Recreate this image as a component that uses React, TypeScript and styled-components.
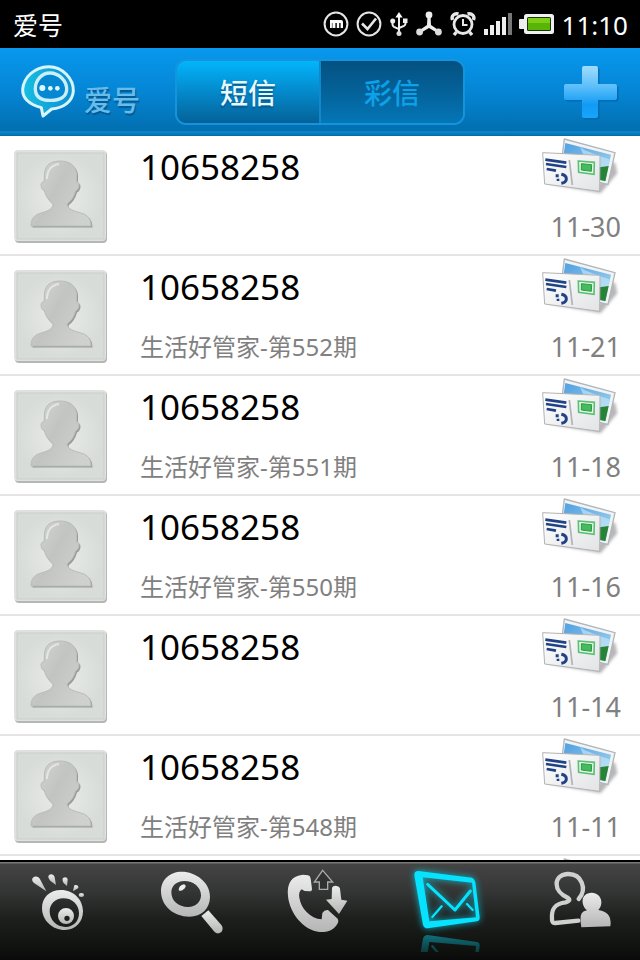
import React, { useState } from 'react';
import styled, { createGlobalStyle, css } from 'styled-components';

const GlobalStyle = createGlobalStyle`
  *, *::before, *::after { box-sizing: border-box; }
  body { margin: 0; background: #fff; font-family: "Noto Sans", "Noto Sans CJK SC", sans-serif; }
  button { font: inherit; color: inherit; border: 0; padding: 0; background: none; cursor: pointer; }
  svg { display: block; flex: none; }
`;

const Screen = styled.div`
  display: flex;
  flex-direction: column;
  height: 100vh;
  overflow: hidden;
`;

const StatusBar = styled.header`
  display: flex;
  align-items: center;
  justify-content: space-between;
  height: 48px;
  flex: none;
  padding: 0 12px 0 13px;
  background: #000;
  color: #fff;
`;

const AppName = styled.span`
  padding-top: 2px;
  font-size: 25px;
  line-height: 36px;
`;

const StatusIcons = styled.div`
  display: flex;
  align-items: center;
  gap: 7px;
`;

const Clock = styled.time`
  padding-top: 2px;
  font-size: 26px;
  line-height: 36px;
`;

const TopBar = styled.div`
  display: grid;
  grid-template-columns: 1fr 290px 1fr;
  align-items: center;
  height: 88px;
  flex: none;
  padding: 0 20px;
  background: linear-gradient(#0898ee, #0585d4 50%, #026fb0 94%, #0a86cb 95%, #0778b8 98%, #0368a4);
`;

const Brand = styled.div`
  display: flex;
  align-items: center;
`;

const BrandName = styled.span`
  padding-top: 16px;
  margin-left: 6px;
  font-size: 28px;
  line-height: 36px;
  font-weight: 500;
  color: #66bdec;
  text-shadow: 1px 2px 1px #045a92;
`;

const Segments = styled.div`
  display: flex;
  height: 66px;
  border: 2px solid #1594dc;
  border-radius: 11px;
  overflow: hidden;
`;

const Segment = styled.button<{ $active: boolean }>`
  flex: 1;
  padding-top: 2px;
  font-size: 28px;
  line-height: 36px;
  font-weight: 500;
  ${({ $active }) =>
    $active
      ? css`
          color: #e8f8ff;
          background: linear-gradient(#02b5fc, #0489cb 50%, #046298);
          text-shadow: 0 2px 2px #04568a;
        `
      : css`
          color: #0da1ea;
          background: linear-gradient(#045181, #046299 50%, #0476b7);
          border-left: 2px solid #1188cb;
        `}
`;

const AddButton = styled.button`
  justify-self: end;
`;

const MessageList = styled.ul`
  flex: 1;
  min-height: 0;
  overflow: hidden;
  margin: 0;
  padding: 0;
  list-style: none;
`;

const MessageItem = styled.li`
  border-bottom: 2px solid #e4e4e4;
`;

const MessageButton = styled.button`
  display: flex;
  align-items: flex-start;
  width: 100%;
  min-height: 118px;
  text-align: left;
`;

const AvatarBox = styled.span`
  padding: 14px 32px 8px 14px;
`;

const MessageText = styled.span`
  display: flex;
  flex: 1;
  flex-direction: column;
  gap: 22px;
  padding-top: 9px;
  min-width: 0;
`;

const Sender = styled.span`
  font-size: 35px;
  line-height: 44px;
  color: #000;
`;

const Snippet = styled.span`
  font-size: 24px;
  line-height: 32px;
  color: #808080;
`;

const MessageMeta = styled.span`
  display: flex;
  flex-direction: column;
  align-items: flex-end;
  gap: 13px;
  padding-right: 19px;
`;

const MessageDate = styled.span`
  font-size: 27px;
  line-height: 36px;
  color: #808080;
`;

const TabBar = styled.nav`
  display: flex;
  height: 100px;
  flex: none;
  border-top: 2px solid #000;
  background: linear-gradient(#777 0, #777 1px, #434443 2px, #343635 30%, #1d1f1d 58%, #0f110e 90%, #0a0a0a);
`;

const Tab = styled.button`
  display: flex;
  flex: 1;
  justify-content: center;
`;

const BadgeIcon = () => (
  <svg width="26" height="26" viewBox="0 0 26 26" fill="none">
    <circle cx="13" cy="13" r="11.4" stroke="#e6e6e6" strokeWidth="2" />
    <path d="M7 9H18Q20 9 20 11V17H17.600V12H16.200V17H13.800V12H12.400V17H7Z" fill="#fff" />
    <path d="M9.300 12V17" stroke="#555" strokeWidth="0.800" />
  </svg>
);

const CheckIcon = () => (
  <svg width="26" height="26" viewBox="0 0 26 26" fill="none" stroke="#e6e6e6">
    <circle cx="13" cy="13" r="11.4" strokeWidth="2" />
    <path d="M6 12.500L11.500 18L20 7.500" strokeWidth="2.600" />
  </svg>
);

const UsbIcon = () => (
  <svg width="20" height="26" viewBox="0 0 20 26" fill="none" stroke="#eee" strokeWidth="2">
    <path d="M10 4V22M3.500 11V13.500Q3.500 15 5 15.800L10 18.200M16.500 11V12.500Q16.500 14 15 14.800L10 17" />
    <path d="M10 1L13.600 6.500H6.400Z" fill="#fff" stroke="none" />
    <circle cx="10" cy="22.500" r="2.500" fill="#ddd" stroke="none" />
    <circle cx="3.700" cy="10" r="2.500" fill="#eee" stroke="none" />
    <path d="M14 7.500H18.500V12H14Z" fill="#eee" stroke="none" />
  </svg>
);

const NetworkIcon = () => (
  <svg width="26" height="26" viewBox="0 0 26 26" fill="#eee">
    <path d="M11.500 5H14.500L15 14L23 19.500L21.500 22L13 17L4.500 22L3 19.500L11 14Z" />
    <circle cx="13" cy="4" r="3.400" />
    <circle cx="3.600" cy="21" r="3.400" fill="#ddd" />
    <circle cx="22.400" cy="21" r="3.400" fill="#ddd" />
  </svg>
);

const AlarmIcon = () => (
  <svg width="28" height="26" viewBox="0 0 28 26" fill="none" stroke="#e8e8e8">
    <circle cx="14" cy="13.500" r="9" strokeWidth="2.800" />
    <path d="M14 8V14H18.500" strokeWidth="2" />
    <path d="M3.500 9C2 5 5 2 9.500 3M24.500 9C26 5 23 2 18.500 3" strokeWidth="3.400" />
    <path d="M7.500 21L5 24M20.500 21L23 24" strokeWidth="3.400" />
  </svg>
);

const SignalIcon = () => (
  <svg width="28" height="26" viewBox="0 0 28 26" fill="#eee">
    <path d="M0 18H4V24H0Z" />
    <path d="M6 14H10V24H6Z" />
    <path d="M12 10H16V24H12Z" />
    <path d="M18 6H22V24H18Z" />
    <path d="M24 2H28V24H24Z" fill="#777" />
  </svg>
);

const BatteryIcon = () => (
  <svg width="36" height="26" viewBox="0 0 36 26">
    <rect x="0" y="8" width="6" height="10" rx="1" fill="#eee" />
    <rect x="5" y="3" width="30" height="20" rx="2.500" fill="#f0f0f4" />
    <rect x="8" y="6" width="24" height="14" rx="1.500" fill="#173900" />
    <rect x="9" y="7" width="22" height="6" fill="#7ecd16" />
    <rect x="9" y="12" width="22" height="7" fill="#58b507" />
  </svg>
);

const BrandLogo = () => (
  <svg width="58" height="58" viewBox="60 190 174 174">
    <defs>
      <linearGradient id="brandFill" x1="0" y1="0" x2="1" y2="0">
        <stop offset="0" stopColor="#17bfe0" />
        <stop offset="1" stopColor="#0d8fd2" />
      </linearGradient>
    </defs>
    <path
      d="M145 201C188 200 221 238 220 274C218 306 190 325 155 328L129 349L124 324C88 314 67 297 68 269C71 232 104 202 145 201Z"
      fill="url(#brandFill)"
      stroke="#d9f4fd"
      strokeWidth="9"
      strokeLinejoin="round"
    />
    <path
      d="M150 220C177 220 200 244 200 269C200 292 179 302 151 302C122 302 106 291 106 267C106 243 124 220 150 220Z"
      fill="#0687d2"
      stroke="#c9effc"
      strokeWidth="10"
    />
    <g fill="#dff6ff">
      <circle cx="127" cy="265" r="9" />
      <circle cx="151" cy="266" r="7" />
      <circle cx="172" cy="266" r="7" />
    </g>
  </svg>
);

const PlusIcon = () => (
  <svg width="62" height="62" viewBox="0 0 62 62">
    <defs>
      <linearGradient id="plusFill" x1="0" y1="0" x2="0" y2="1">
        <stop offset="0" stopColor="#a2dcff" />
        <stop offset="0.4" stopColor="#5bbefa" />
        <stop offset="0.75" stopColor="#109bf5" />
        <stop offset="1" stopColor="#18a5fb" />
      </linearGradient>
    </defs>
    <path transform="translate(1.500 1.500)" fill="#035f9c" opacity=".6" d="M26 5H38Q40 5 40 7V23H57Q59 23 59 25V37Q59 39 57 39H40V55Q40 57 38 57H26Q24 57 24 55V39H8Q6 39 6 37V25Q6 23 8 23H24V7Q24 5 26 5Z" />
    <path fill="url(#plusFill)" d="M26 5H38Q40 5 40 7V23H57Q59 23 59 25V37Q59 39 57 39H40V55Q40 57 38 57H26Q24 57 24 55V39H8Q6 39 6 37V25Q6 23 8 23H24V7Q24 5 26 5Z" />
  </svg>
);

const BUST =
  'M46 11C37 11 31 15 30.500 24L30 32C26 31 26 39 30.500 41C32 47 35 51 39 54C39 59 34 61 27 63C20 65 17 69 17 76H77C77 69 74 65 67 63C60 61 53 59 53 54C57 51 60 47 61.500 41C66 39 66 31 62.500 32V24C62 15 55 11 46 11Z';

const Avatar = () => (
  <svg width="94" height="94" viewBox="0 0 94 94">
    <defs>
      <radialGradient id="avatarBack">
        <stop offset="0" stopColor="#e9ece9" />
        <stop offset="1" stopColor="#d8dcd8" />
      </radialGradient>
      <linearGradient id="bustFill" x1="0" y1="0" x2="1" y2="0.6">
        <stop offset="0" stopColor="#d6d8d6" />
        <stop offset="0.5" stopColor="#c2c4c2" />
        <stop offset="1" stopColor="#cfd1cf" />
      </linearGradient>
    </defs>
    <rect x="1" y="1" width="92" height="92" rx="4" fill="#b4b8b4" />
    <rect x="0" y="0" width="92" height="91" rx="4" fill="#dfe1df" />
    <rect x="3" y="3" width="87" height="86" fill="url(#avatarBack)" stroke="#c9cec9" />
    <path transform="translate(1.500 1.500)" d={BUST} fill="#999d99" />
    <path d={BUST} fill="url(#bustFill)" stroke="#b9bcb9" />
    <path d="M33 29C33 20 38 15 45 14" fill="none" stroke="#e4e6e4" strokeWidth="2" />
  </svg>
);

const PostcardIcon = () => (
  <svg width="84" height="60" viewBox="51 18 252 180">
    <defs>
      <linearGradient id="skyFill" x1="0" y1="0" x2="1" y2="1">
        <stop offset="0" stopColor="#4f9fe0" />
        <stop offset="1" stopColor="#a5d7f3" />
      </linearGradient>
      <linearGradient id="cardFill" x1="0" y1="0" x2="1" y2="1">
        <stop offset="0" stopColor="#fff" />
        <stop offset="1" stopColor="#e2e3e5" />
      </linearGradient>
      <filter id="cardShadow" x="-20%" y="-20%" width="140%" height="140%">
        <feGaussianBlur stdDeviation="5" />
      </filter>
    </defs>
    <path d="M76 160L242 190L292 130L286 100L262 92L240 160Z" fill="#888" opacity=".6" filter="url(#cardShadow)" />
    <path d="M133 27L285 68L264 163L120 130Z" fill="#f2f3f4" stroke="#b0b6bb" strokeWidth="4" />
    <path d="M136 39L273 74L256 154L124 120Z" fill="url(#skyFill)" />
    <path d="M180 51C200 66 230 74 269 88L262 124L205 108Z" fill="#cbe9f7" opacity=".6" />
    <path d="M266 108L256 154L225 146L238 112Z" fill="#278437" />
    <path d="M68 68L240 76L239 184L74 162Z" fill="url(#cardFill)" stroke="#b3b3b5" strokeWidth="3" />
    <path d="M148 90L157 165" stroke="#b0b2b5" strokeWidth="5" />
    <g stroke="#1f4186" strokeWidth="8" fill="none">
      <path d="M76 89L139 98M78 102L139 111M80 117L108 122" />
      <path d="M124 133C145 137 143 157 124 160" strokeWidth="9" />
    </g>
    <path d="M107 133H116V142H107ZM110 146H118V153H110Z" fill="#1f4186" />
    <path d="M175 93L223 97L222 133L176 127Z" fill="#edf8ee" stroke="#5cc176" strokeWidth="5" />
    <path d="M184 101L215 104L214 124L184 120Z" fill="#47ba60" stroke="#289a43" strokeWidth="3" />
  </svg>
);

const TabGradient = ({ id }: { id: string }) => (
  <defs>
    <linearGradient id={id} x1="0" y1="0" x2="0" y2="1">
      <stop offset="0" stopColor="#ececec" />
      <stop offset="1" stopColor="#b5b5b5" />
    </linearGradient>
  </defs>
);

const EyeIcon = () => (
  <svg width="96" height="96" viewBox="48 36 288 288">
    <TabGradient id="eyeFill" />
    <g fill="url(#eyeFill)">
      <path
        fillRule="evenodd"
        d="M183 120C222 120 249 150 249 184C249 216 227 240 195 240C157 240 126 211 126 174C126 143 149 120 183 120ZM190 145C166 145 149 162 149 184C149 210 169 231 197 231C221 231 237 213 237 190C237 164 217 145 190 145Z"
      />
      <path fillRule="evenodd" d="M198 174A24 24 0 1 0 198 222A24 24 0 1 0 198 174ZM201 197A8 8 0 1 1 201 213A8 8 0 1 1 201 197Z" />
      <path d="M98 84C105 77 116 79 121 89L139 124L102 99C96 94 95 88 98 84Z" />
      <path d="M147 75C154 70 162 74 164 82L168 105L151 92C145 86 143 79 147 75Z" />
      <path d="M189 84C195 80 202 82 203 89L201 108L191 99C188 94 186 88 189 84Z" />
      <path d="M223 106C230 103 236 107 235 114L219 124Z" />
      <ellipse cx="244" cy="135" rx="8" ry="6" />
    </g>
  </svg>
);

const SearchIcon = () => (
  <svg width="96" height="96" viewBox="432 36 288 288">
    <TabGradient id="lensFill" />
    <path d="M604 198L625 181L664 225C670 233 668 242 663 247C656 252 648 251 642 244Z" fill="url(#lensFill)" />
    <path
      fillRule="evenodd"
      fill="url(#lensFill)"
      d="M545 65C588 65 630 97 630 140C630 175 605 200 568 200C522 200 483 169 483 123C483 89 509 65 545 65ZM553 93C529 93 514 108 514 127C514 153 535 171 564 171C588 171 603 155 603 136C603 111 580 93 553 93Z"
    />
    <path d="M536 121Q536 106 552 103Q561 106 554 115Q544 126 536 121Z" fill="#eee" />
  </svg>
);

const CallIcon = () => (
  <svg width="96" height="96" viewBox="96 36 288 288">
    <TabGradient id="callFill" />
    <path
      fill="url(#callFill)"
      d="M189 74L204 76Q211 77 212 86L216 116Q216 124 209 124L194 123Q187 120 185 118Q175 125 178 143C183 176 211 205 245 208L247 189Q253 179 264 180L293 206Q298 214 290 225C279 242 260 247 239 246C191 242 149 190 144 139C140 99 155 77 189 74Z"
    />
    <path d="M248 61L278 96H263V118H238V96H223Z" fill="#303231" stroke="#ababab" strokeWidth="4" />
    <path d="M276 113Q278 107 287 107Q299 109 300 116L304 149L322 152L297 192L258 149L275 147Z" fill="url(#callFill)" />
  </svg>
);

const Envelope = () => (
  <g fill="none" stroke="#07e2ff" strokeLinejoin="round" strokeLinecap="round">
    <path
      fillRule="evenodd"
      fill="#07e2ff"
      stroke="none"
      d="M55 63L216 83Q224 86 226 97L239 202Q240 212 231 214L83 235Q72 235 69 224L43 76Q42 63 55 63ZM68 82L88 214L228 202L216 98Z"
    />
    <path d="M83 103L165 180L211 123" strokeWidth="9" />
    <path d="M125 169L97 201M201 162L218 180" strokeWidth="7" />
  </g>
);

const MailIcon = () => (
  <svg width="96" height="96" viewBox="0 36 288 288">
    <defs>
      <filter id="mailGlow" x="-30%" y="-30%" width="160%" height="160%">
        <feGaussianBlur stdDeviation="11" />
      </filter>
      <linearGradient id="fadeFill" x1="0" y1="0" x2="0" y2="1">
        <stop offset="0" stopColor="#fff" stopOpacity=".5" />
        <stop offset="1" stopColor="#fff" stopOpacity=".2" />
      </linearGradient>
      <mask id="mirrorFade" maskUnits="userSpaceOnUse" x="0" y="240" width="288" height="66">
        <rect x="0" y="240" width="288" height="66" fill="url(#fadeFill)" />
      </mask>
    </defs>
    <g filter="url(#mailGlow)" opacity=".8">
      <Envelope />
    </g>
    <Envelope />
    <g mask="url(#mirrorFade)">
      <g transform="matrix(1 0 0 -1 0 490)">
        <Envelope />
      </g>
    </g>
  </svg>
);

const ContactsIcon = () => (
  <svg width="96" height="96" viewBox="384 36 288 288">
    <TabGradient id="contactFill" />
    <path
      d="M535 212L466 219Q455 220 456 207C454 180 461 161 497 157Q515 152 503 143C459 124 459 76 502 72C546 70 562 118 536 147"
      fill="none"
      stroke="#d0d0d0"
      strokeWidth="13"
      strokeLinecap="round"
    />
    <path
      d="M575 128C594 128 606 144 604 160C603 169 600 174 595 180C623 185 632 197 632 220L631 229L544 232Q539 201 545 190Q550 182 561 181C542 165 541 129 575 128Z"
      fill="url(#contactFill)"
    />
  </svg>
);

type Message = { id: number; sender: string; snippet?: string; date: string };

const MESSAGES: Message[] = [
  { id: 1, sender: '10658258', date: '11-30' },
  { id: 2, sender: '10658258', snippet: '生活好管家-第552期', date: '11-21' },
  { id: 3, sender: '10658258', snippet: '生活好管家-第551期', date: '11-18' },
  { id: 4, sender: '10658258', snippet: '生活好管家-第550期', date: '11-16' },
  { id: 5, sender: '10658258', date: '11-14' },
  { id: 6, sender: '10658258', snippet: '生活好管家-第548期', date: '11-11' },
  { id: 7, sender: '', date: '' },
];

const TABS = [
  { label: '首页', Icon: EyeIcon },
  { label: '搜索', Icon: SearchIcon },
  { label: '通话', Icon: CallIcon },
  { label: '信息', Icon: MailIcon },
  { label: '联系人', Icon: ContactsIcon },
];

const MessageRow = ({ message }: { message: Message }) => (
  <MessageItem>
    <MessageButton>
      <AvatarBox>
        <Avatar />
      </AvatarBox>
      <MessageText>
        <Sender>{message.sender}</Sender>
        {message.snippet && <Snippet>{message.snippet}</Snippet>}
      </MessageText>
      <MessageMeta>
        <PostcardIcon />
        <MessageDate>{message.date}</MessageDate>
      </MessageMeta>
    </MessageButton>
  </MessageItem>
);

export default function App() {
  const [segment, setSegment] = useState('短信');
  return (
    <>
      <GlobalStyle />
      <Screen>
        <StatusBar>
          <AppName>爱号</AppName>
          <StatusIcons>
            <BadgeIcon />
            <CheckIcon />
            <UsbIcon />
            <NetworkIcon />
            <AlarmIcon />
            <SignalIcon />
            <BatteryIcon />
            <Clock>11:10</Clock>
          </StatusIcons>
        </StatusBar>
        <TopBar>
          <Brand>
            <BrandLogo />
            <BrandName>爱号</BrandName>
          </Brand>
          <Segments>
            {['短信', '彩信'].map((name) => (
              <Segment key={name} $active={segment === name} aria-pressed={segment === name} onClick={() => setSegment(name)}>
                {name}
              </Segment>
            ))}
          </Segments>
          <AddButton aria-label="新建">
            <PlusIcon />
          </AddButton>
        </TopBar>
        <MessageList>
          {MESSAGES.map((message) => (
            <MessageRow key={message.id} message={message} />
          ))}
        </MessageList>
        <TabBar>
          {TABS.map(({ label, Icon }) => (
            <Tab key={label} aria-label={label}>
              <Icon />
            </Tab>
          ))}
        </TabBar>
      </Screen>
    </>
  );
}
